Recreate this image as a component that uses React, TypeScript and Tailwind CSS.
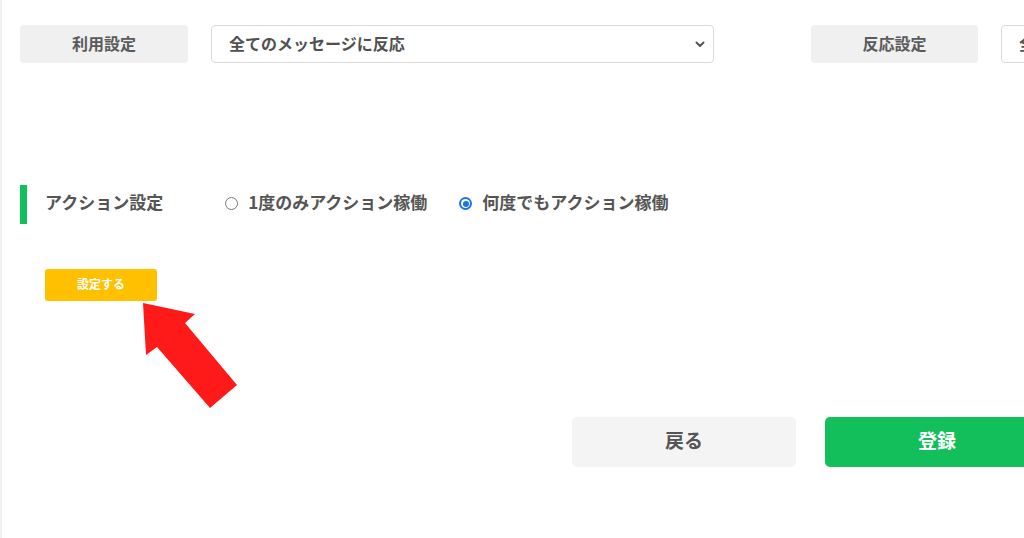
import React from "react";

function Chevron() {
  return (
    <svg width="10" height="7" viewBox="0 0 10 7" className="shrink-0">
      <path d="M1.5 1.5 L5 5 L8.5 1.5" fill="none" stroke="#555" strokeWidth="2" strokeLinecap="round" strokeLinejoin="round" />
    </svg>
  );
}

function Radio({ checked }: { checked?: boolean }) {
  if (checked) {
    return (
      <span className="w-[13px] h-[13px] rounded-full bg-[#1a73e8] flex items-center justify-center shrink-0">
        <span className="w-[9px] h-[9px] rounded-full bg-white flex items-center justify-center">
          <span className="w-[6px] h-[6px] rounded-full bg-[#1a73e8]" />
        </span>
      </span>
    );
  }
  return <span className="w-[13px] h-[13px] rounded-full border border-[#767676] bg-white shrink-0" />;
}

export default function App() {
  return (
    <div
      className="relative w-[1024px] h-[538px] overflow-hidden bg-white border-l-2 border-[#efefef] text-[#555]"
      style={{ fontFamily: '"Noto Sans CJK JP", "Noto Sans", sans-serif' }}
    >
      <div className="pl-[18px] pt-[25px]">
        {/* top row */}
        <div className="flex flex-nowrap h-[38px]">
          <div className="w-[168px] shrink-0 rounded-[4px] bg-[#f0f0f0] flex items-center justify-center">
            <span className="mb-[3px] text-[16px] font-bold text-[#5a5a5a]">利用設定</span>
          </div>
          <div className="ml-[23px] w-[503px] shrink-0 rounded-[4px] border border-[#d9d9d9] bg-white flex items-center justify-between pl-[17px] pr-[8px]">
            <span className="mb-[3px] text-[16px] font-bold text-[#505050] whitespace-nowrap">全てのメッセージに反応</span>
            <Chevron />
          </div>
          <div className="ml-[97px] w-[167px] shrink-0 rounded-[4px] bg-[#f0f0f0] flex items-center justify-center">
            <span className="mb-[3px] text-[16px] font-bold text-[#5a5a5a]">反応設定</span>
          </div>
          <div className="ml-[23px] w-[300px] shrink-0 rounded-[4px] border border-[#d9d9d9] bg-white flex items-center pl-[17px]">
            <span className="mb-[3px] text-[16px] font-bold text-[#505050] whitespace-nowrap">全て</span>
          </div>
        </div>

        {/* action row */}
        <div className="mt-[122px] flex flex-nowrap items-center h-[39px]">
          <div className="w-[7px] h-full bg-[#12bf5a] shrink-0" />
          <span className="ml-[18px] mb-[5px] text-[17px] font-bold text-[#555] whitespace-nowrap">アクション設定</span>
          <div className="ml-[62px] mb-[2px] flex items-center">
            <Radio />
            <span className="ml-[10px] mb-[3px] text-[17px] font-bold text-[#555] whitespace-nowrap">1度のみアクション稼働</span>
          </div>
          <div className="ml-[32px] mb-[2px] flex items-center">
            <Radio checked />
            <span className="ml-[10px] mb-[3px] text-[17px] font-bold text-[#555] whitespace-nowrap">何度でもアクション稼働</span>
          </div>
        </div>

        {/* setting button */}
        <div className="mt-[45px] ml-[25px] w-[112px] h-[32px] rounded-[3px] bg-[#ffc000] flex items-center justify-center">
          <span className="mb-[2px] text-[12px] font-bold text-white">設定する</span>
        </div>

        {/* bottom buttons */}
        <div className="mt-[116px] ml-[552px] flex flex-nowrap gap-[29px]">
          <div className="w-[224px] h-[50px] shrink-0 rounded-[5px] bg-[#f4f4f4] flex items-center justify-center">
            <span className="mb-[4px] text-[19px] font-bold text-[#555]">戻る</span>
          </div>
          <div className="w-[224px] h-[50px] shrink-0 rounded-[5px] bg-[#12bf5a] flex items-center justify-center">
            <span className="mb-[4px] text-[19px] font-bold text-white">登録</span>
          </div>
        </div>
      </div>

      {/* red arrow overlay */}
      <svg className="absolute left-0 top-0 pointer-events-none" width="1022" height="538" viewBox="2 0 1022 538">
        <polygon
          points="143,303 195,314 185,323 237,385 210,408 157,347 146,355"
          fill="#ff1a1a"
        />
      </svg>
    </div>
  );
}
